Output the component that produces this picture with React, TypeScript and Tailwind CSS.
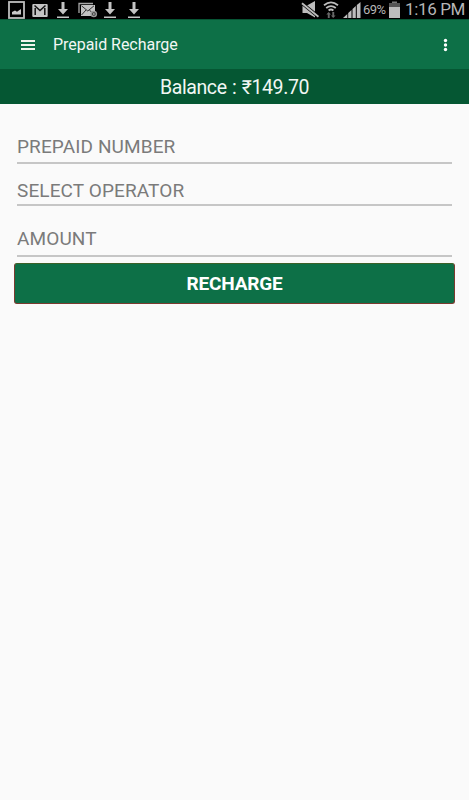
const DownloadIcon = ({ className }: { className?: string }) => (
  <svg viewBox="0 0 14 19" className={`h-[19px] w-[14px] flex-shrink-0 ${className || ''}`} fill="#c4c4c4">
    <path d="M5.500 2h3v7H12l-5 5.500L2 9h3.500z" />
    <path d="M1 16.500h12V18H1z" />
  </svg>
);

function NotificationIcons() {
  return (
    <div className="flex items-center">
      {/* screenshot saved */}
      <svg viewBox="0 0 18 19" className="ml-2 h-[19px] w-[18px]">
        <rect x="1" y="2" width="15" height="16" fill="none" stroke="#bdbdbd" strokeWidth="1.800" />
        <path d="M4 14.500V12l3-1.500 2 1.200L13 9v5.500z" fill="#c8c8c8" />
      </svg>
      {/* gmail */}
      <svg viewBox="0 0 17 19" className="ml-[6px] h-[19px] w-[17px]">
        <rect x="0.300" y="4" width="15.400" height="13" rx="1" fill="#c4c4c4" />
        <path d="M3.200 15V8M12.800 15V8M2.500 5.500L8 10.500l5.500-5" fill="none" stroke="#111" strokeWidth="1.500" />
      </svg>
      <DownloadIcon className="ml-[7px]" />
      {/* email */}
      <svg viewBox="0 0 20 19" className="ml-[8px] h-[19px] w-[20px]">
        <path d="M1 13V3.500h14" fill="none" stroke="#a8a8a8" strokeWidth="1.300" />
        <rect x="3" y="5" width="14" height="11" fill="#c2c2c2" />
        <path d="M3.500 5.800l6.300 5.200L16 5.800M3.500 15l4.500-5M16 15l-4.500-5" fill="none" stroke="#222" strokeWidth="0.900" />
        <circle cx="15.800" cy="14" r="3.300" fill="#999" />
        <circle cx="15.800" cy="14" r="1.500" fill="none" stroke="#333" strokeWidth="0.800" />
      </svg>
      <DownloadIcon className="ml-[5px]" />
      <DownloadIcon className="ml-[10px]" />
    </div>
  );
}

function SystemIcons() {
  return (
    <div className="flex h-[19px] items-center text-[#b5b5b5]">
      {/* muted speaker */}
      <svg viewBox="0 0 18 19" className="h-[19px] w-[18px]">
        <path d="M1.500 5.500H6L14 1v16.500L6 13H1.500z" fill="#bdbdbd" />
        <path d="M1 3.200l16.500 13.500" stroke="#000" strokeWidth="3.400" />
        <path d="M1 3.200l16.500 13.500" stroke="#bdbdbd" strokeWidth="1.900" />
      </svg>
      {/* wifi */}
      <svg viewBox="0 0 16 19" className="ml-[4px] h-[19px] w-[16px]">
        <g fill="none" stroke="#bdbdbd" strokeWidth="1.800">
          <path d="M1 5.200q7-5.600 14 0" />
          <path d="M3.200 8q4.800-3.800 9.600 0" />
          <path d="M5.600 10.500q2.400-1.900 4.800 0" />
        </g>
        <path d="M4.800 18v-3.500H3.300L5.700 12l2.300 2.500H6.700V18zM9.300 12v3.500H7.900l2.300 2.500 2.400-2.500h-1.400V12z" fill="#686868" />
      </svg>
      {/* signal */}
      <svg viewBox="0 0 18 19" className="ml-[4px] h-[19px] w-[18px]" fill="#bdbdbd">
        <path d="M0 18l4.300-4V18zM5.200 13l3.300-3V18H5.200zM9.500 9l3.300-3V18H9.500zM13.800 5L17.500 2V18h-3.700z" />
      </svg>
      <span className="ml-[2px] w-[25px] whitespace-nowrap text-[13px] leading-[19px] tracking-[-0.600px]">69%</span>
      {/* battery */}
      <svg viewBox="0 0 13 19" className="h-[19px] w-[13px]">
        <path d="M4 1.500h5V3H4z" fill="#777" />
        <path d="M1 3h11v4H1z" fill="#555" />
        <path d="M1 7h11v11H1z" fill="#bdbdbd" />
      </svg>
      <span className="ml-[4px] w-[64px] whitespace-nowrap text-[17px] leading-[19px] tracking-[-0.350px]">1:16 PM</span>
    </div>
  );
}

function StatusBar() {
  return (
    <div className="flex h-[19px] items-center justify-between bg-black">
      <NotificationIcons />
      <SystemIcons />
    </div>
  );
}

function AppBar() {
  return (
    <header className="flex h-[50px] items-center border-t border-[#075535] bg-[#0d7047] pl-[21px] pr-[20px] text-[#f2f7f4]">
      <svg viewBox="0 0 14 12" className="h-[12px] w-[14px]" fill="#f0f5ec">
        <path d="M0 1h14v2H0zM0 5h14v2H0zM0 9h14v2H0z" />
      </svg>
      <h1 className="ml-[18px] text-[16px] leading-5 tracking-[-0.040px]">Prepaid Recharge</h1>
      <svg viewBox="0 0 14 14" className="-mr-[3px] ml-auto h-[14px] w-[14px]" fill="#fff">
        <circle cx="7.500" cy="2.500" r="1.700" />
        <circle cx="7.500" cy="7" r="1.700" />
        <circle cx="7.500" cy="11.500" r="1.700" />
      </svg>
    </header>
  );
}

export default function App() {
  return (
    <div className="h-[800px] w-[469px] overflow-hidden bg-[#fafafa] font-['Roboto',sans-serif]">
      <StatusBar />
      <AppBar />
      <div className="flex h-[35px] items-center justify-center bg-[#055733] pt-[3px] text-[19.500px] tracking-[-0.400px] [word-spacing:1px] text-[#f2f7f4]">
        Balance : ₹149.70
      </div>

      <main className="px-[14px] text-[19px] tracking-[0.120px] text-[#7b7b7b]">
        <div className="mx-[3px] flex h-[60px] items-end border-b-2 border-[#c6c6c6] pb-1">
          <span className="leading-[22px]">PREPAID NUMBER</span>
        </div>
        <div className="mx-[3px] flex h-[42px] items-end border-b-2 border-[#c6c6c6] pb-[2px]">
          <span className="leading-[22px]">SELECT OPERATOR</span>
        </div>
        <div className="mx-[3px] flex h-[51px] items-end border-b-2 border-[#c6c6c6] pb-1">
          <span className="leading-6">AMOUNT</span>
        </div>
        <button className="mt-[6px] flex h-[41px] w-full items-center justify-center rounded-[3px] border border-[#7a3a30] border-t-[#3c6128] bg-[#0d7047] pt-px text-[19px] font-bold tracking-[-0.150px] text-white">
          RECHARGE
        </button>
      </main>
    </div>
  );
}
